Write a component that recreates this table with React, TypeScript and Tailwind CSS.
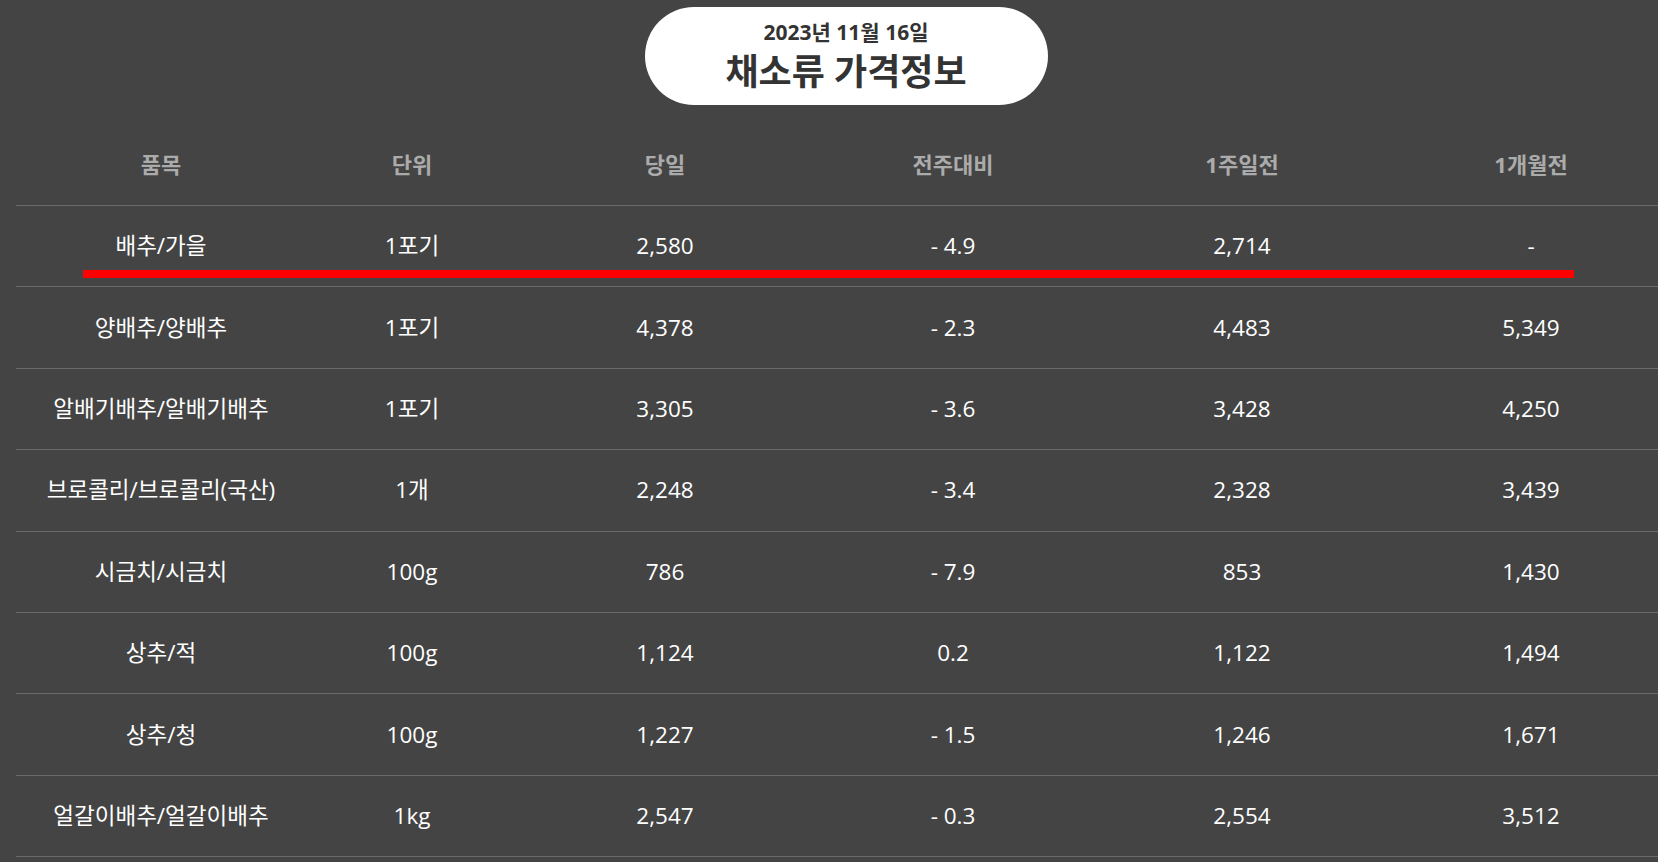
import React from "react";

const rows = [
  ["배추/가을", "1포기", "2,580", "- 4.9", "2,714", "-"],
  ["양배추/양배추", "1포기", "4,378", "- 2.3", "4,483", "5,349"],
  ["알배기배추/알배기배추", "1포기", "3,305", "- 3.6", "3,428", "4,250"],
  ["브로콜리/브로콜리(국산)", "1개", "2,248", "- 3.4", "2,328", "3,439"],
  ["시금치/시금치", "100g", "786", "- 7.9", "853", "1,430"],
  ["상추/적", "100g", "1,124", "0.2", "1,122", "1,494"],
  ["상추/청", "100g", "1,227", "- 1.5", "1,246", "1,671"],
  ["얼갈이배추/얼갈이배추", "1kg", "2,547", "- 0.3", "2,554", "3,512"],
];

const heads = ["품목", "단위", "당일", "전주대비", "1주일전", "1개월전"];

const cols = "grid grid-cols-[290px_212px_294px_282px_296px_282px_1fr]";

export default function App() {
  return (
    <div className="w-full h-[862px] overflow-hidden bg-[#444444]">
      <div
        className="w-[1692px] h-[862px]"
        style={{ fontFamily: '"Open Sans", "Noto Sans CJK KR", sans-serif' }}
      >
        <div className="flex justify-center pt-[7px]">
          <div className="w-[403px] h-[98px] rounded-full bg-white flex flex-col items-center pt-[12px]">
            <div className="text-[21px] font-bold text-[#333] leading-[26px]">2023년 11월 16일</div>
            <div className="text-[36px] font-bold text-[#333] leading-[46px] mt-[4px]">채소류 가격정보</div>
          </div>
        </div>

        <div className="ml-[16px] w-[1676px] mt-[19px]">
          <div className={`${cols} h-[82px] items-center border-b border-[#6a6a6a]`}>
            {heads.map((h) => (
              <div key={h} className="text-center text-[22px] font-bold text-[#ababab]">
                {h}
              </div>
            ))}
            <div />
          </div>
          {rows.map((r, i) => (
            <div key={i} className={`${cols} relative h-[81.4px] items-center border-b border-[#6a6a6a]`}>
              {r.map((c, j) => (
                <div key={j} className="text-center text-[22.5px] text-white">
                  {c}
                </div>
              ))}
              <div />
              {i === 0 && (
                <div className="absolute left-[67px] w-[1491px] top-[64px] h-[8px] bg-[#ff0000]" />
              )}
            </div>
          ))}
        </div>
      </div>
    </div>
  );
}
